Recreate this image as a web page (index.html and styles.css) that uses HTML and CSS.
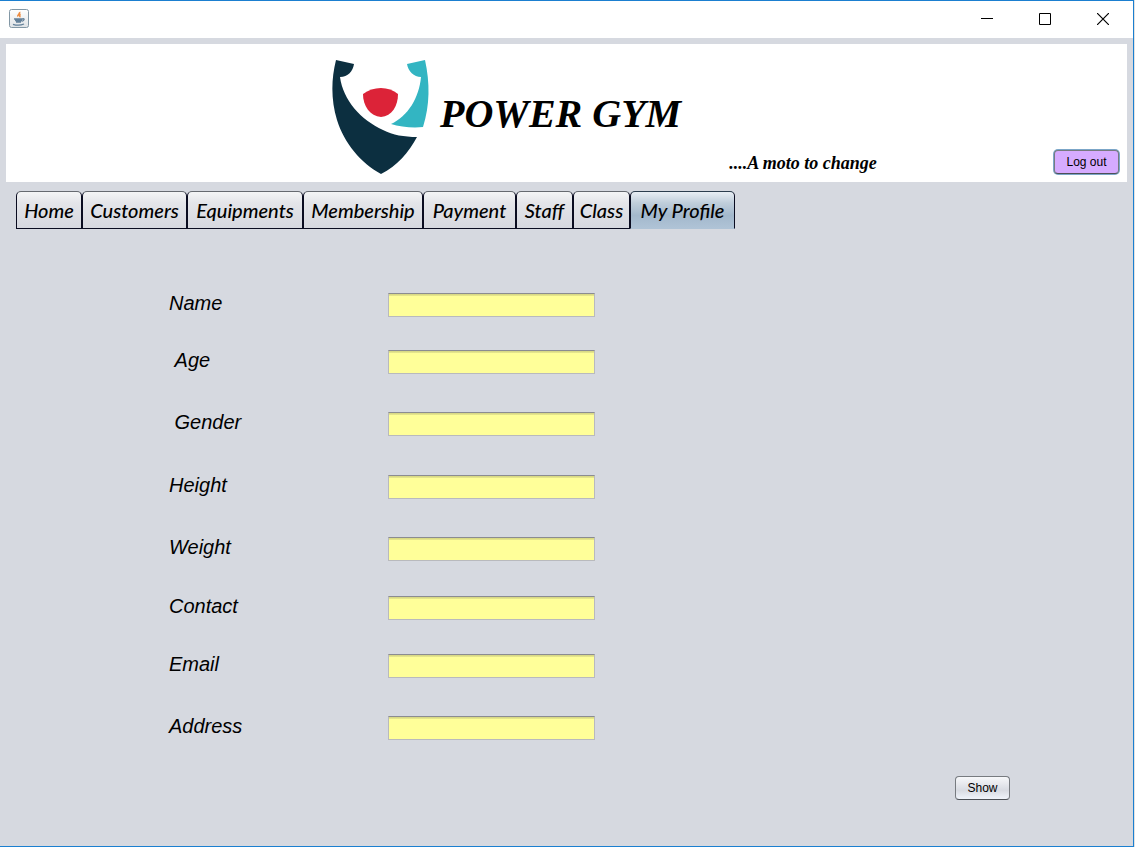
FILE: index.html
```html
<!DOCTYPE html>
<html lang="en">
<head>
<meta charset="utf-8">
<title>Power Gym</title>
<link rel="stylesheet" href="styles.css">
</head>
<body>
<div class="window">
  <div class="titlebar">
    <svg class="app-icon" width="20" height="19" viewBox="0 0 20 19" aria-hidden="true">
      <defs><linearGradient id="ico" x1="0" y1="0" x2="0" y2="1"><stop offset="0" stop-color="#fff"/><stop offset="1" stop-color="#dfe3e6"/></linearGradient></defs>
      <rect x=".5" y=".5" width="19" height="18" rx="2" fill="url(#ico)" stroke="#8297a5"/>
      <path d="M10.500 3c1 2-2.500 2.500-1.500 4.500M11.500 5c-2 1 .2 2-1 3.200" fill="none" stroke="#ee8b3e" stroke-width="1.700"/>
      <path d="M5 10h9M6 11.500h7M7 13h5M4 15.300c3 1 8 1 11-.3M13.500 9.800c2.500-.5 2 2-.8 2.500" fill="none" stroke="#638099" stroke-width="1.300"/>
    </svg>
    <div class="window-controls">
      <button class="window-button" aria-label="Minimize"><svg width="12" height="12" viewBox="0 0 12 12"><path d="M0 5.500h12" stroke="#000"/></svg></button>
      <button class="window-button" aria-label="Maximize"><svg width="12" height="12" viewBox="0 0 12 12"><path d="M.5.500h11v11H.5z" fill="none" stroke="#000"/></svg></button>
      <button class="window-button" aria-label="Close"><svg width="12" height="12" viewBox="0 0 12 12"><path d="M0 0l12 12M12 0L0 12" stroke="#000" stroke-width="1.200"/></svg></button>
    </div>
  </div>
  <header class="banner">
    <svg class="logo" width="98" height="114" viewBox="0 0 98 114" role="img" aria-label="Power Gym logo">
      <path d="M4 0L22 4C21 11 16 17 8 17C11 40 29 60 51 70C61 75 72 77 85 77C77 92 65 106 49 114C29 103 12 83 5 60C-1 40-1 20 4 0Z" fill="#0c2f40"/>
      <path d="M75 4L93 0C98 23 98 45 91 67C81 68 68 67 59 64C76 56 87 38 89 17C82 17 76 11 75 4Z" fill="#33b5c2"/>
      <path d="M31 34C41 26 57 26 66 34C66 46 60 56 49 57C38 56 31 46 31 34Z" fill="#dc2338"/>
    </svg>
    <h1 class="brand">POWER GYM</h1>
    <p class="motto">....A moto to change</p>
    <button class="button logout">Log out</button>
  </header>
  <nav class="tabs" role="tablist">
    <button class="tab" role="tab">Home</button>
    <button class="tab" role="tab">Customers</button>
    <button class="tab" role="tab">Equipments</button>
    <button class="tab" role="tab">Membership</button>
    <button class="tab" role="tab">Payment</button>
    <button class="tab" role="tab">Staff</button>
    <button class="tab" role="tab">Class</button>
    <button class="tab tab-active" role="tab" aria-selected="true">My Profile</button>
  </nav>
  <main class="profile">
    <form class="fields">
      <label class="label" for="name">Name</label><input class="field" id="name" type="text">
      <label class="label" for="age">&nbsp;Age</label><input class="field" id="age" type="text">
      <label class="label" for="gender">&nbsp;Gender</label><input class="field" id="gender" type="text">
      <label class="label" for="height">Height</label><input class="field" id="height" type="text">
      <label class="label" for="weight">Weight</label><input class="field" id="weight" type="text">
      <label class="label" for="contact">Contact</label><input class="field" id="contact" type="text">
      <label class="label" for="email">Email</label><input class="field" id="email" type="text">
      <label class="label" for="address">Address</label><input class="field" id="address" type="text">
    </form>
    <div class="actions"><button class="button show">Show</button></div>
  </main>
</div>
</body>
</html>
```
FILE: styles.css
```css
* { box-sizing: border-box; }

body {
  margin: 0;
  padding-right: 1px;
  background: #e4e2e0;
  color: #000;
  font-family: "Liberation Sans", Arial, sans-serif;
}

button { font-family: inherit; color: inherit; }

.window {
  display: flex;
  flex-direction: column;
  min-height: 100vh;
  border: 1px solid #1b7fd0;
  border-left: 0;
  background: #d6d9e0;
}

.titlebar {
  display: flex;
  align-items: center;
  justify-content: space-between;
  height: 37px;
  padding: 0 1px 2px 9px;
  background: #fff;
}

.window-controls { display: flex; }

.window-button {
  display: flex;
  align-items: center;
  justify-content: center;
  width: 58px;
  height: 35px;
  padding: 0;
  border: 0;
  background: none;
}

.banner {
  display: flex;
  align-items: flex-end;
  height: 138px;
  margin: 6px 6px 0;
  padding: 0 8px 8px 326px;
  background: #fff;
}

.logo { flex: none; }

.brand {
  margin: 0 0 36px 10px;
  font: italic bold 40px/48px "Liberation Serif", serif;
  white-space: nowrap;
}

.motto {
  margin: 0 0 0 48px;
  font: italic bold 18px/22px "Liberation Serif", serif;
  white-space: nowrap;
}

.button {
  padding: 0;
  border: 1px solid #777b80;
  border-bottom-color: #4c5056;
  border-radius: 4px;
  font-size: 12px;
}

.logout {
  width: 65px;
  height: 24px;
  margin-left: auto;
  background: #d6abff;
  box-shadow: 0 0 0 1px #7ba6c8;
}

.show {
  width: 55px;
  height: 24px;
  background: linear-gradient(#f7f8fa, #d8dbe2 60%, #f0f4fb);
}

.tabs {
  display: grid;
  grid-template-columns: 66px 105px 116px 120px 93px 57px 57px 105px;
  margin: 9px 0 0 16px;
}

.tab {
  height: 38px;
  padding: 0;
  border: 1px solid #0a0c20;
  border-top-color: #666a70;
  border-radius: 5px 5px 0 0;
  background: linear-gradient(#f4f5f6, #e4e5e9 30%, #d6d8df);
  font: italic 500 20px/24px Lato, sans-serif;
  white-space: nowrap;
}

.tab-active {
  border-top-color: #2c3d4e;
  border-bottom-color: #afc3d6;
  background: linear-gradient(#e8eef4, #c0cedb 30%, #a3b8cc 65%, #afc3d6);
}

.profile { padding: 58px 123px 40px 169px; }

.fields {
  display: grid;
  grid-template-columns: 219px 207px;
  grid-template-rows: 57px 62px 63px 62px 59px 58px 62px 66px;
}

.label {
  font-style: italic;
  font-size: 20px;
  line-height: 32px;
}

.field {
  height: 24px;
  margin-top: 6px;
  padding: 0 6px;
  border: 1px solid #b9babd;
  border-top-color: #8b8c91;
  border-radius: 0;
  background: linear-gradient(#d4d481, #eaea90 2px, #ffff99 2px);
  font-size: 14px;
}

.actions { display: flex; justify-content: flex-end; }
```
